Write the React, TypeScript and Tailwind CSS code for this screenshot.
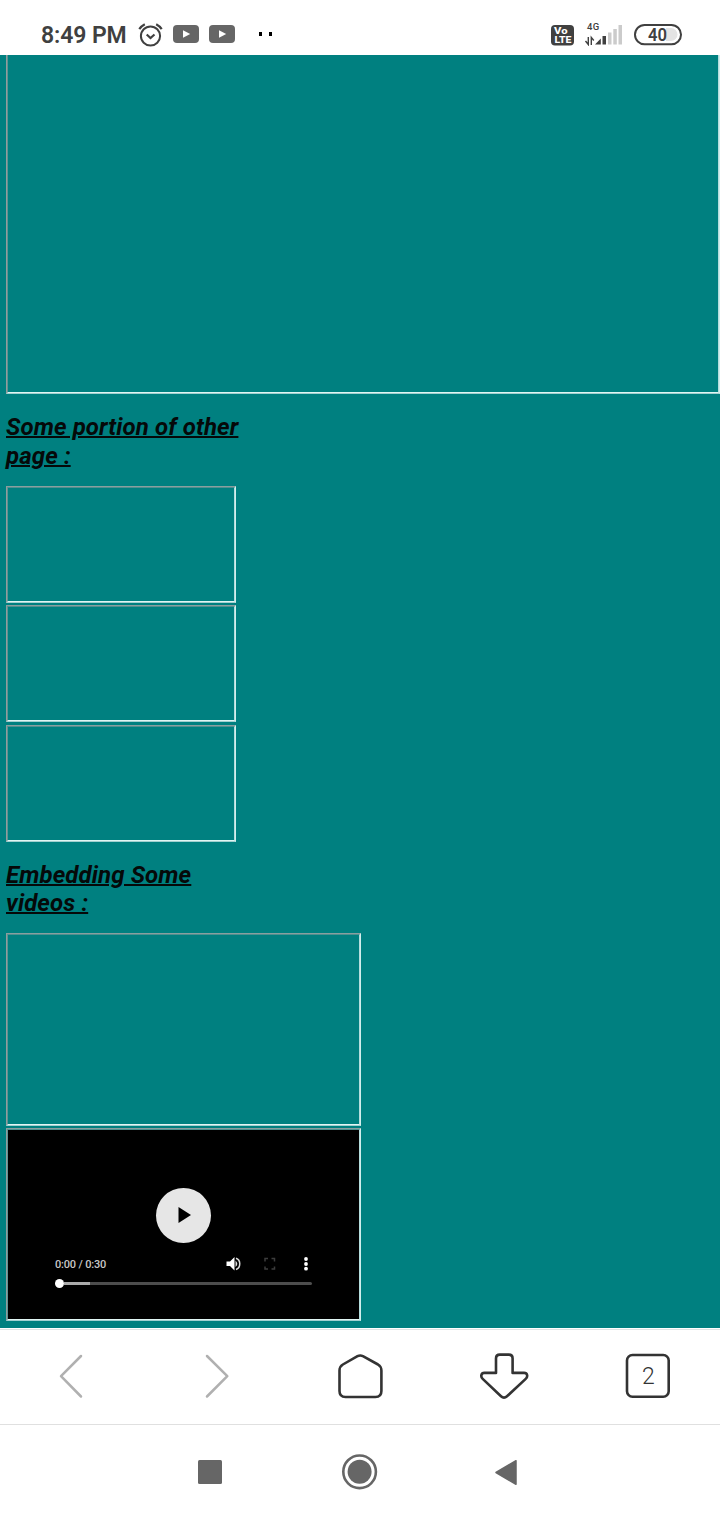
import type { ReactNode } from "react";

function Frame({ className, children }: { className: string; children?: ReactNode }) {
  return (
    <div className={`border border-t-[#8a9f9f] border-l-[#929c9c] border-r-[#d2eeec] border-b-[#a2d0d0] ${className}`}>
      <div className="h-full w-full border border-t-[#4f9090] border-l-[#5f9393] border-r-[#b4dcdc] border-b-[#e0f6f4]">
        {children}
      </div>
    </div>
  );
}

function TubeIcon() {
  return (
    <svg width="26" height="18" viewBox="0 0 26 18">
      <rect width="26" height="18" rx="4" fill="#666" />
      <path d="M10 5.2 17.2 9 10 12.8z" fill="#fff" />
    </svg>
  );
}

function StatusBar() {
  return (
    <header className="flex h-[55px] items-start bg-white pt-[22px] text-[#404040]">
      <div className="mt-px ml-[41px] w-[97px] text-[23px] leading-[26px] font-semibold tracking-[-0.100px] whitespace-nowrap">8:49 PM</div>
      <svg className="-mt-px" width="26" height="28" viewBox="138 21 26 28" fill="none" stroke="#404040" strokeWidth="2">
        <circle cx="150.5" cy="36" r="9.6" />
        <path d="M146.7 34.5 150.5 38l4-3.5" strokeWidth="2.2" />
        <path d="M139.3 29.2q2-3.2 5.5-5M161.7 29.2q-2-3.2-5.5-5" strokeWidth="2.2" />
      </svg>
      <div className="mt-[3px] ml-[9px] flex gap-[10px]">
        <TubeIcon />
        <TubeIcon />
      </div>
      <div className="mt-[10px] ml-[24px] flex gap-[7px]">
        <i className="h-1 w-[3px] bg-black" />
        <i className="h-1 w-[3px] bg-black" />
      </div>
      <svg className="mt-[3px] ml-[279px]" width="23" height="21" viewBox="0 0 23 21">
        <rect width="23" height="20.500" rx="4" fill="#404040" />
        <g fill="#fff" fontWeight="800" fontSize="9.5">
          <text x="3" y="9.300" textLength="13.500" lengthAdjust="spacingAndGlyphs">Vo</text>
          <text x="3.500" y="18" textLength="17" lengthAdjust="spacingAndGlyphs">LTE</text>
        </g>
      </svg>
      <div className="ml-[10px] w-[40px]">
        <div className="ml-[3px] h-[9px] text-[9.500px] leading-[10px] font-medium tracking-[0.3px]">4G</div>
        <svg className="-mt-[7px]" width="40" height="22" viewBox="584 24 40 22">
          <path d="M588.300 37v7.500L585.500 41M591.300 45v-7.500l2.500 3" fill="none" stroke="#404040" strokeWidth="1.4" />
          <path d="M595 44.500 600.800 38.500v6z" fill="#404040" />
          <rect x="602.5" y="36" width="3.5" height="8.500" fill="#404040" />
          <rect x="608" y="32.500" width="3.500" height="12" fill="#cbcbcb" />
          <rect x="613.300" y="29" width="3.500" height="15.500" fill="#cbcbcb" />
          <rect x="618.500" y="25" width="3.500" height="19.500" fill="#cbcbcb" />
        </svg>
      </div>
      <svg className="mt-[1px] ml-[10px]" width="48" height="24" viewBox="634 23 48 24">
        <path d="M666 28h5a6.500 6.500 0 0 1 0 13H666z" fill="#e4e4e4" />
        <rect x="635" y="25" width="46" height="19.300" rx="9.600" fill="none" stroke="#404040" strokeWidth="2" />
        <text x="657.500" y="41.200" textAnchor="middle" fill="#404040" fontSize="18.500" fontWeight="600" textLength="19" lengthAdjust="spacingAndGlyphs">40</text>
      </svg>
    </header>
  );
}

function VideoPlayer() {
  return (
    <div className="flex h-full w-full flex-col bg-black pl-[47px]">
      <div className="mt-[58px] ml-[101px] flex h-[54.500px] w-[54.500px] items-center justify-center rounded-full bg-[#e6e6e6]">
        <svg width="14" height="16" viewBox="0 0 14 16" className="ml-[4px]">
          <path d="M0.500 0 13 8 0.500 16z" />
        </svg>
      </div>
      <div className="mt-[13.500px] flex h-4 w-[258px] items-center">
        <span className="w-[170px] shrink-0 pt-px text-[11px] leading-4 font-medium tracking-[-0.180px] whitespace-nowrap text-[#c8c8c8]">0:00 / 0:30</span>
        <svg className="shrink-0" width="88" height="16" viewBox="225 1256 88 16">
          <path d="M226.500 1261.500h3.500l4.500-4.500v13.500l-4.500-4.500h-3.500z" fill="#fff" />
          <path d="M236 1258.200c5 1.500 5 9.800 0 11.300" fill="none" stroke="#ddd" strokeWidth="1.500" />
          <path d="M235.500 1260.500q3.600 3.300 0 6.600z" fill="#ddd" />
          <path d="M265 1261.500v-3h3M271.500 1258.500h3v3M274.500 1266.500v2.500h-3M268 1269h-3v-2.500" fill="none" stroke="#3c3c3c" strokeWidth="1.500" />
          <circle cx="306" cy="1259" r="1.900" fill="#fff" />
          <circle cx="306" cy="1264" r="1.900" fill="#fff" />
          <circle cx="306" cy="1268.700" r="1.900" fill="#fff" />
        </svg>
      </div>
      <div className="mt-[6px] flex h-[11px] w-[257px] items-center">
        <i className="h-[9px] w-[9px] shrink-0 rounded-full bg-white" />
        <i className="h-[3px] w-[26px] shrink-0 bg-[#aaa]" />
        <i className="h-[3px] flex-1 rounded-r bg-[#4d4d4d]" />
      </div>
    </div>
  );
}

function Heading({ children, className }: { children: ReactNode; className: string }) {
  return (
    <h2 className={`font-bold italic underline decoration-[2px] tracking-[0.110px] text-[24px] whitespace-nowrap text-[#050909] ${className}`}>
      {children}
    </h2>
  );
}

function BrowserBar() {
  return (
    <nav className="flex h-[97px] items-start border-b border-[#e0e0e0] bg-white">
      <svg width="720" height="96" viewBox="0 1328 720 96" fill="none" stroke="#333" strokeWidth="2.600" strokeLinecap="round" strokeLinejoin="round">
        <path d="M0 1329.500h720" stroke="#e0e4e4" strokeWidth="1" />
        <path d="M81 1356 61 1376.200 81 1396.500M207 1356l20.300 20.200L207 1396.500" stroke="#b0b0b0" strokeWidth="2.500" />
        <path d="M357.500 1356.200q2.700-1.400 5.400 0L378 1364.500q3.400 2 3.400 6v20.500q0 6-6 6H345.500q-6 0-6-6V1370.500q0-4 3.400-6z" />
        <path d="M496 1372.900v-14.500q0-3.800 3.800-3.800h9q3.800 0 3.800 3.800v14.500h11.500c3.400 0 4 3.800 1.600 6L507 1396.300q-3 2.800-6 0L482.700 1378.900c-2.400-2.200-1.600-6 1.600-6z" />
        <rect x="627" y="1355" width="41.700" height="41.700" rx="5.500" />
        <text x="648.300" y="1384" textAnchor="middle" fill="#333" stroke="none" fontSize="23" fontWeight="300">2</text>
      </svg>
    </nav>
  );
}

function SystemBar() {
  return (
    <nav className="flex h-[95px] items-center bg-white pb-px pl-[198px]">
      <i className="h-[23.500px] w-[23.500px] rounded-[1.500px] bg-[#666]" />
      <svg className="ml-[119.500px]" width="38" height="38" viewBox="0 0 38 38">
        <circle cx="18.600" cy="18.800" r="16.300" fill="none" stroke="#666" strokeWidth="2.600" />
        <circle cx="18.600" cy="18.800" r="12" fill="#666" />
      </svg>
      <svg className="ml-[115px]" width="24" height="27" viewBox="0 0 24 27">
        <path d="M22 1.700v23.600L2 13.500z" fill="#666" stroke="#666" strokeWidth="1.500" strokeLinejoin="round" />
      </svg>
    </nav>
  );
}

export default function App() {
  return (
    <div className="h-[1520px] w-[720px] overflow-hidden font-[Roboto,sans-serif]">
      <StatusBar />
      <main className="h-[1273px] bg-[#008080] pl-[6px]">
        <Frame className="h-[339px] w-[714px] border-t-0 *:border-t-0" />
        <Heading className="mt-[19px] leading-[28.500px]">Some portion of other<br />page :</Heading>
        <Frame className="mt-[16px] h-[117px] w-[230px]" />
        <Frame className="mt-[2px] h-[117px] w-[230px]" />
        <Frame className="mt-[3px] h-[117px] w-[230px]" />
        <Heading className="mt-[19px] leading-[28px]">Embedding Some<br />videos :</Heading>
        <Frame className="mt-[16px] h-[193px] w-[355px]" />
        <Frame className="mt-[2px] h-[193px] w-[355px]"><VideoPlayer /></Frame>
      </main>
      <BrowserBar />
      <SystemBar />
    </div>
  );
}
